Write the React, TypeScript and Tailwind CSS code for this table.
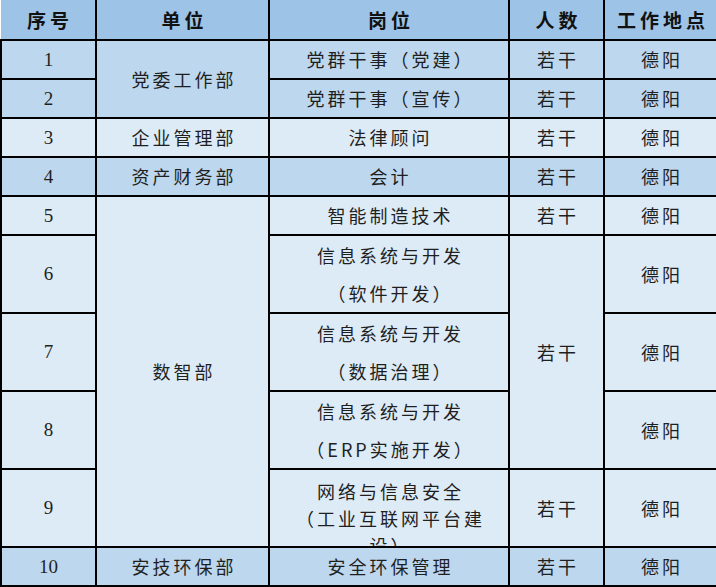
import React from 'react';

const cn = '[font-family:"Noto_Sans_CJK_SC","Noto_Sans",sans-serif]';
const num = '[font-family:"Liberation_Serif","Noto_Sans_CJK_SC",serif]';

const MID = 'bg-[#bdd7ee]';
const LIGHT = 'bg-[#ddebf7]';

const td = 'border-2 border-black text-center align-middle p-0 text-[#1f1f1f]';
const txt = `${cn} text-[18px] tracking-[3px]`;
const nb = `${num} text-[19px]`;

function Num({ n }: { n: number }) {
    return <td className={`${td} ${nb} leading-tight`}>{n}</td>;
}

function T({ children, rowSpan, bg }: { children: React.ReactNode; rowSpan?: number; bg?: string }) {
    return (
        <td rowSpan={rowSpan} className={`${td} ${txt} leading-tight ${bg ?? ''}`}>
            <span className="pl-[3px]">{children}</span>
        </td>
    );
}

function TwoLine({ a, b }: { a: string; b: string }) {
    return (
        <td className={`${td} ${txt}`}>
            <div className="pl-[3px] leading-[38px]">{a}</div>
            <div className="pl-[3px] leading-[38px]">{b}</div>
        </td>
    );
}

export default function App() {
    return (
        <div className="w-[716px] h-[587px] bg-white overflow-hidden">
            <table className="border-collapse table-fixed w-[716px]">
                <colgroup>
                    <col className="w-[95px]" />
                    <col className="w-[173px]" />
                    <col className="w-[240px]" />
                    <col className="w-[95px]" />
                    <col className="w-[113px]" />
                </colgroup>
                <thead>
                    <tr className="h-[40px] bg-[#9dc3e6]">
                        {['序号', '单位', '岗位', '人数', '工作地点'].map((h, i) => (
                            <th
                                key={h}
                                className={`border-2 border-black border-t-0 ${i === 0 ? 'border-l-0' : ''} ${i === 4 ? 'border-r-0' : ''} ${cn} text-[19px] font-bold tracking-[4px] text-[#111] text-center align-middle p-0 leading-tight`}
                            >
                                <span className="pl-[4px]">{h}</span>
                            </th>
                        ))}
                    </tr>
                </thead>
                <tbody>
                    <tr className={`h-[39px] ${MID}`}>
                        <Num n={1} />
                        <T rowSpan={2}>党委工作部</T>
                        <T>党群干事（党建）</T>
                        <T>若干</T>
                        <T>德阳</T>
                    </tr>
                    <tr className={`h-[39px] ${MID}`}>
                        <Num n={2} />
                        <T>党群干事（宣传）</T>
                        <T>若干</T>
                        <T>德阳</T>
                    </tr>
                    <tr className={`h-[39px] ${LIGHT}`}>
                        <Num n={3} />
                        <T>企业管理部</T>
                        <T>法律顾问</T>
                        <T>若干</T>
                        <T>德阳</T>
                    </tr>
                    <tr className={`h-[39px] ${MID}`}>
                        <Num n={4} />
                        <T>资产财务部</T>
                        <T>会计</T>
                        <T>若干</T>
                        <T>德阳</T>
                    </tr>
                    <tr className={`h-[39px] ${LIGHT}`}>
                        <Num n={5} />
                        <T rowSpan={5}>数智部</T>
                        <T>智能制造技术</T>
                        <T>若干</T>
                        <T>德阳</T>
                    </tr>
                    <tr className={`h-[78px] ${LIGHT}`}>
                        <Num n={6} />
                        <TwoLine a="信息系统与开发" b="（软件开发）" />
                        <T rowSpan={3}>若干</T>
                        <T>德阳</T>
                    </tr>
                    <tr className={`h-[78px] ${LIGHT}`}>
                        <Num n={7} />
                        <TwoLine a="信息系统与开发" b="（数据治理）" />
                        <T>德阳</T>
                    </tr>
                    <tr className={`h-[78px] ${LIGHT}`}>
                        <Num n={8} />
                        <TwoLine a="信息系统与开发" b="（ERP实施开发）" />
                        <T>德阳</T>
                    </tr>
                    <tr className={`h-[78px] ${LIGHT}`}>
                        <Num n={9} />
                        <td className={`${td} ${txt}`}>
                            <div className="h-[76px] overflow-hidden pt-[8px] leading-[27px]">
                                <div className="pl-[3px]">网络与信息安全</div>
                                <div className="pl-[3px]">（工业互联网平台建</div>
                                <div className="pl-[3px]">设）</div>
                            </div>
                        </td>
                        <T>若干</T>
                        <T>德阳</T>
                    </tr>
                    <tr className={`h-[39px] ${MID}`}>
                        <Num n={10} />
                        <T>安技环保部</T>
                        <T>安全环保管理</T>
                        <T>若干</T>
                        <T>德阳</T>
                    </tr>
                </tbody>
            </table>
        </div>
    );
}
